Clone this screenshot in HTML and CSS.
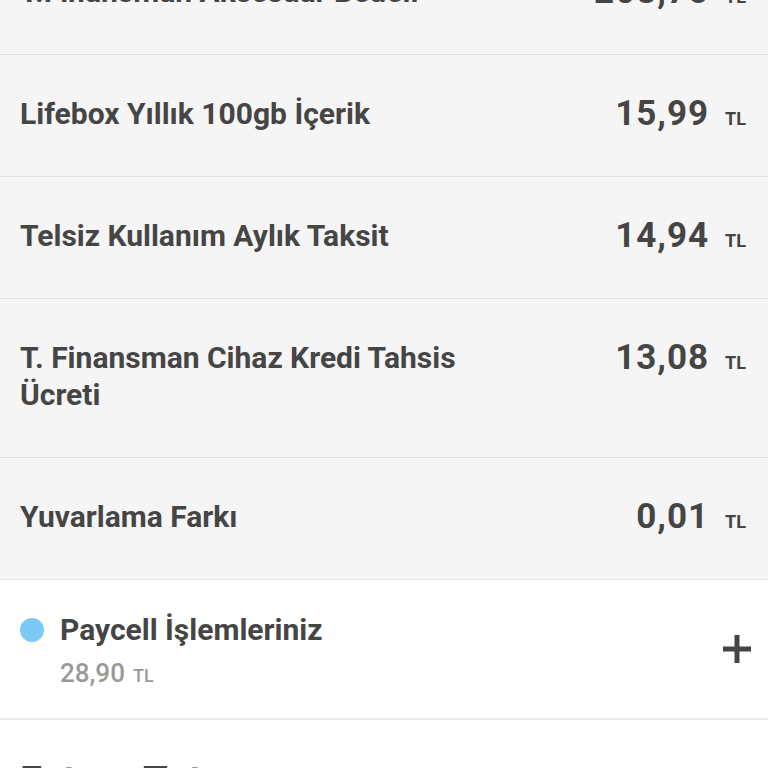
FILE: index.html
```html
<!DOCTYPE html>
<html>

<head>
  <title>Fatura Detayı</title>
  <link rel="stylesheet" href="styles.css">
</head>

<body>
  <div class="Bill-List">
    <div class="Bill-Row">
      <span class="Bill-Label">T.Finansman Aksesuar Bedeli</span>
      <span class="Bill-Amount">208,75<small>TL</small></span>
    </div>
    <div class="Bill-Row">
      <span class="Bill-Label">Lifebox Yıllık 100gb İçerik</span>
      <span class="Bill-Amount">15,99<small>TL</small></span>
    </div>
    <div class="Bill-Row">
      <span class="Bill-Label">Telsiz Kullanım Aylık Taksit</span>
      <span class="Bill-Amount">14,94<small>TL</small></span>
    </div>
    <div class="Bill-Row">
      <span class="Bill-Label">T. Finansman Cihaz Kredi Tahsis Ücreti</span>
      <span class="Bill-Amount">13,08<small>TL</small></span>
    </div>
    <div class="Bill-Row">
      <span class="Bill-Label">Yuvarlama Farkı</span>
      <span class="Bill-Amount">0,01<small>TL</small></span>
    </div>
  </div>

  <div class="Paycell">
    <span class="Paycell-Dot"></span>
    <div class="Paycell-Info">
      <div class="Paycell-Title">Paycell İşlemleriniz</div>
      <div class="Paycell-Sum">28,90<small>TL</small></div>
    </div>
    <svg class="Paycell-Plus" width="30" height="30" viewBox="0 0 30 30">
      <path d="M15 1v28M1 15h28" stroke="#444" stroke-width="5" />
    </svg>
  </div>

  <div class="Total">
    <span class="Total-Label">Fatura Tutarı</span>
    <span class="Total-Amount">771,73<small>TL</small></span>
  </div>
</body>

</html>
```

FILE: styles.css
```css
body, html {
  margin: 0;
  padding: 0;
}

body {
  background: #fff;
  font-family: Roboto, "Noto Sans", sans-serif;
  color: #454545;
  height: 768px;
  overflow: hidden;
}

.Bill-List {
  background: #f5f5f5;
  margin-top: -67px;
}

.Bill-Row {
  display: flex;
  justify-content: space-between;
  align-items: flex-start;
  padding: 40px 22px 44px 20px;
  border-bottom: 1px solid #e3e3e3;
}

.Bill-Label {
  max-width: 470px;
  font-size: 30px;
  line-height: 37px;
  font-weight: 700;
}

.Bill-Amount {
  font-size: 35px;
  line-height: 37px;
  font-weight: 700;
  letter-spacing: 1px;
  white-space: nowrap;
}

.Bill-Amount small,
.Paycell-Sum small,
.Total-Amount small {
  font-size: 18px;
  line-height: 1;
  margin-left: 16px;
  letter-spacing: 0;
}

/* Paycell block */
.Paycell {
  display: flex;
  align-items: center;
  padding: 31px 16px 26px 20px;
  border-bottom: 2px solid #ececec;
}

.Paycell-Dot {
  width: 24px;
  height: 24px;
  border-radius: 50%;
  background: #7ec8f6;
  align-self: flex-start;
  margin-top: 7px;
  margin-right: 16px;
}

.Paycell-Info {flex: 1;}

.Paycell-Title {
  font-size: 30px;
  line-height: 37px;
  font-weight: 700;
}

.Paycell-Sum {
  font-size: 26px;
  line-height: 37px;
  font-weight: 500;
  color: #999;
  margin-top: 7px;
}

.Paycell-Sum small {margin-left: 8px;}

.Paycell-Plus {margin-bottom: 6px;}

/* Grand total, only its top edge shows */
.Total {
  display: flex;
  justify-content: space-between;
  padding: 38px 22px 0 20px;
}

.Total-Label {
  font-size: 40px;
  font-weight: 700;
}

.Total-Amount {
  font-size: 48px;
  font-weight: 700;
  letter-spacing: 2px;
}
```
